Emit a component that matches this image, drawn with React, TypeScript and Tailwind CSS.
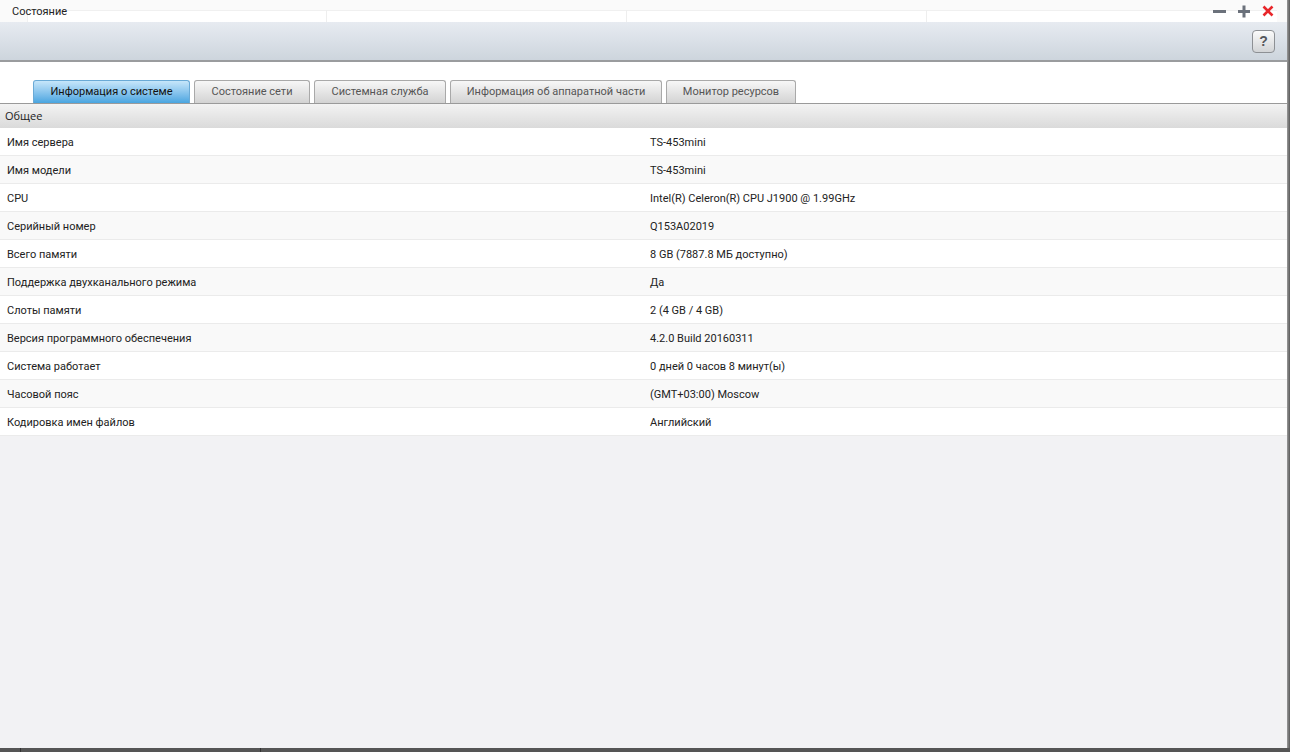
import React from 'react';

const rows: [string, string][] = [
  ['Имя сервера', 'TS-453mini'],
  ['Имя модели', 'TS-453mini'],
  ['CPU', 'Intel(R) Celeron(R) CPU J1900 @ 1.99GHz'],
  ['Серийный номер', 'Q153A02019'],
  ['Всего памяти', '8 GB (7887.8 МБ доступно)'],
  ['Поддержка двухканального режима', 'Да'],
  ['Слоты памяти', '2 (4 GB / 4 GB)'],
  ['Версия программного обеспечения', '4.2.0 Build 20160311'],
  ['Система работает', '0 дней 0 часов 8 минут(ы)'],
  ['Часовой пояс', '(GMT+03:00) Moscow'],
  ['Кодировка имен файлов', 'Английский'],
];

const tabs = [
  { label: 'Информация о системе', w: 'w-[157px]' },
  { label: 'Состояние сети', w: 'w-[116px]' },
  { label: 'Системная служба', w: 'w-[132px]' },
  { label: 'Информация об аппаратной части', w: 'w-[212px]' },
  { label: 'Монитор ресурсов', w: 'w-[130px]' },
];

const App: React.FC = () => {
  return (
    <div className="h-[752px] w-[1290px] flex flex-col overflow-hidden bg-white text-[11px] font-['Roboto','Liberation_Sans',sans-serif] text-[#222]">
      <div className="flex flex-1 min-h-0">
        <div className="flex-1 flex flex-col min-w-0">
          {/* Title bar */}
          <div className="h-[22px] flex items-center bg-[#fafafa] relative">
            <div className="absolute left-[27px] right-[10px] top-[10px] bottom-0 border-t border-l border-[#f0f0f0] bg-white" />
            <div className="absolute left-[326px] top-[10px] bottom-0 border-l border-[#eeeeee]" />
            <div className="absolute left-[626px] top-[10px] bottom-0 border-l border-[#eeeeee]" />
            <div className="absolute left-[926px] top-[10px] bottom-0 border-l border-[#eeeeee]" />
            <span className="absolute left-3 top-[4px] text-[11px] text-[#222]">Состояние</span>
            <div className="ml-auto mr-[13px] flex items-center gap-[12px] relative">
              <svg width="13" height="13" viewBox="0 0 13 13">
                <rect x="0" y="5" width="13" height="3" fill="#6b717b" />
              </svg>
              <svg width="12" height="13" viewBox="0 0 12 13">
                <rect x="0" y="5" width="12" height="3" fill="#6b717b" />
                <rect x="4.5" y="0.5" width="3" height="12" fill="#6b717b" />
              </svg>
              <svg width="12" height="12" viewBox="0 0 12 12">
                <path d="M1.5 1.5 L10.5 10.5 M10.5 1.5 L1.5 10.5" stroke="#e8262a" strokeWidth="2.6" />
              </svg>
            </div>
          </div>

          {/* Toolbar */}
          <div className="h-[40px] flex items-center justify-end pr-[12px] bg-gradient-to-b from-[#e7ebf1] to-[#cdd5dd] border-b-2 border-[#9a9c9e]">
            <button className="w-[23px] h-[23px] rounded-[4px] border border-[#8d9094] bg-gradient-to-b from-[#fbfbfb] to-[#d2d4d6] flex items-center justify-center text-[14px] font-bold text-[#55585c] font-['Liberation_Sans',sans-serif]">
              ?
            </button>
          </div>

          {/* Tabs */}
          <div className="h-[42px] bg-white flex items-end pl-[33px] gap-[4px] border-b border-[#9a9a9a]">
            {tabs.map((t, i) => (
              <div
                key={t.label}
                className={
                  i === 0
                    ? `${t.w} h-[23px] flex items-center justify-center rounded-t-[3px] border border-b-0 border-[#6aaad6] bg-gradient-to-b from-[#c6e6fa] to-[#48a5e0] text-[#111]`
                    : `${t.w} h-[23px] flex items-center justify-center rounded-t-[3px] border border-b-0 border-[#a9a9a9] bg-gradient-to-b from-[#f7f7f7] to-[#d3d3d3] text-[#555]`
                }
              >
                {t.label}
              </div>
            ))}
          </div>

          {/* Section header */}
          <div className="h-[24px] flex items-center pl-[5px] bg-gradient-to-b from-[#f3f3f3] to-[#dadada] text-[#222] font-['Open_Sans','Liberation_Sans',sans-serif]">
            Общее
          </div>

          {/* Rows */}
          <div className="flex flex-col">
            {rows.map(([k, v], i) => (
              <div
                key={k}
                className={`h-[28px] pt-[4px] flex items-center border-b border-[#ebebeb] ${i % 2 === 0 ? 'bg-white' : 'bg-[#f9f9f9]'}`}
              >
                <div className="w-[650px] pl-[7px]">{k}</div>
                <div className="flex-1">{v}</div>
              </div>
            ))}
          </div>

          <div className="flex-1 bg-[#f2f2f4]" />
        </div>
        <div className="w-[3px] bg-gradient-to-r from-[#9a9a9a] to-[#5a5a5a]" />
      </div>
      <div className="h-[4px] bg-[#555] flex">
        <div className="w-[21px] border-r border-[#333]" />
        <div className="w-[240px] border-r border-[#333]" />
      </div>
    </div>
  );
};

export default App;
